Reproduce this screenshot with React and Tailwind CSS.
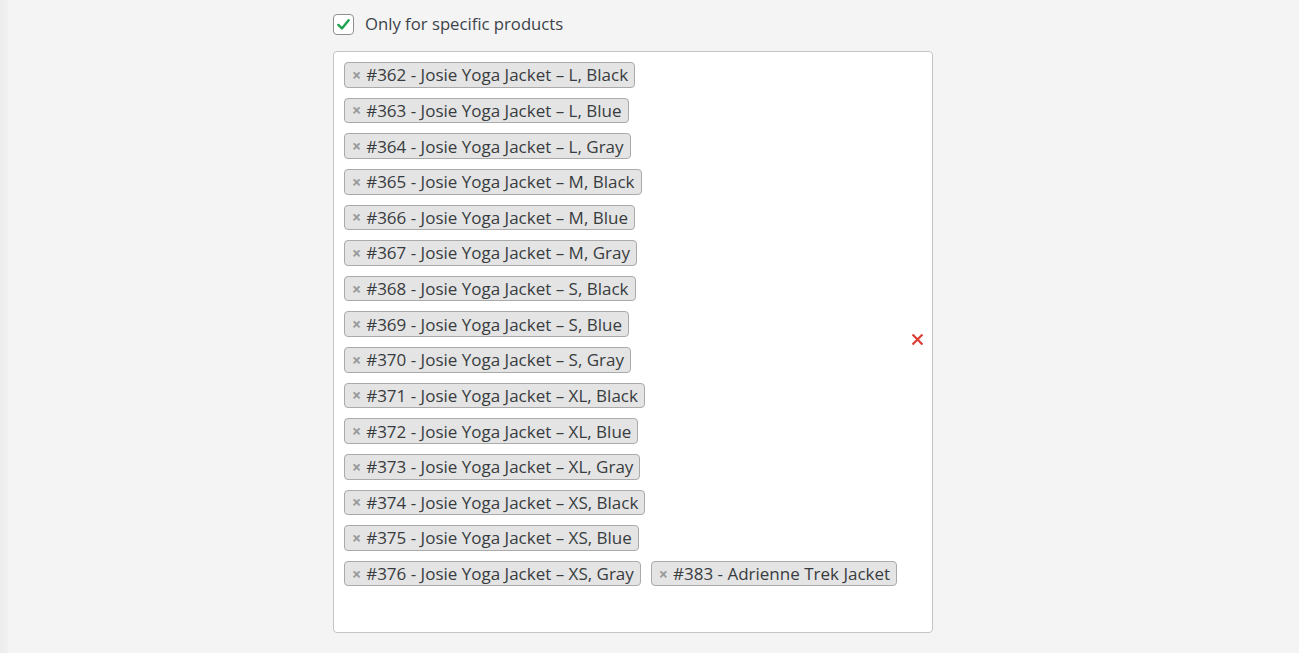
import React from "react";

const items = [
  ["#362 - Josie Yoga Jacket – L, Black"],
  ["#363 - Josie Yoga Jacket – L, Blue"],
  ["#364 - Josie Yoga Jacket – L, Gray"],
  ["#365 - Josie Yoga Jacket – M, Black"],
  ["#366 - Josie Yoga Jacket – M, Blue"],
  ["#367 - Josie Yoga Jacket – M, Gray"],
  ["#368 - Josie Yoga Jacket – S, Black"],
  ["#369 - Josie Yoga Jacket – S, Blue"],
  ["#370 - Josie Yoga Jacket – S, Gray"],
  ["#371 - Josie Yoga Jacket – XL, Black"],
  ["#372 - Josie Yoga Jacket – XL, Blue"],
  ["#373 - Josie Yoga Jacket – XL, Gray"],
  ["#374 - Josie Yoga Jacket – XS, Black"],
  ["#375 - Josie Yoga Jacket – XS, Blue"],
  ["#376 - Josie Yoga Jacket – XS, Gray", "#383 - Adrienne Trek Jacket"],
];

function Tag({ label }) {
  return (
    <span className="inline-flex h-[25.64px] items-center rounded-[4px] border border-[#aaaaaa] bg-[#e4e4e4] pl-[7px] pr-[6px] text-[17px] leading-none text-[#383c40]">
      <span className="mr-[5px] text-[16px] font-bold text-[#999999]">×</span>
      <span>{label}</span>
    </span>
  );
}

export default function App() {
  return (
    <div
      className="flex min-h-[653px] w-full bg-[#f4f4f4]"
      style={{ fontFamily: '"Open Sans", "Noto Sans", sans-serif' }}
    >
      <div className="w-[8px] shrink-0 bg-gradient-to-r from-[#ececec] to-[#f0f0f0]" />
      <div className="flex flex-col pl-[325px] pt-[13px]">
        <label className="flex h-[22px] items-center gap-[11px]">
          <span className="flex h-[21px] w-[21px] items-center justify-center rounded-[4px] border border-[#8c8f94] bg-white">
            <svg width="15" height="15" viewBox="0 0 16 16">
              <path
                d="M2.5 8.5 L6.3 12.2 L13.5 3.5"
                fill="none"
                stroke="#1da34f"
                strokeWidth="2.6"
                strokeLinecap="round"
                strokeLinejoin="round"
              />
            </svg>
          </span>
          <span className="text-[16.7px] text-[#3c434a]">Only for specific products</span>
        </label>
        <div className="relative mt-[16px] flex h-[582px] w-[600px] flex-col gap-[10px] rounded-[4px] border border-[#c3c4c7] bg-white p-[10px]">
          {items.map((row, i) => (
            <div key={i} className="flex gap-[10px]">
              {row.map((t) => (
                <Tag key={t} label={t} />
              ))}
            </div>
          ))}
          <span className="absolute right-[9px] top-[282px] flex">
            <svg width="11" height="11" viewBox="0 0 11 11">
              <path d="M1.3 1.3 L9.7 9.7 M9.7 1.3 L1.3 9.7" stroke="#dd3d36" strokeWidth="2.2" strokeLinecap="square" />
            </svg>
          </span>
        </div>
      </div>
    </div>
  );
}
